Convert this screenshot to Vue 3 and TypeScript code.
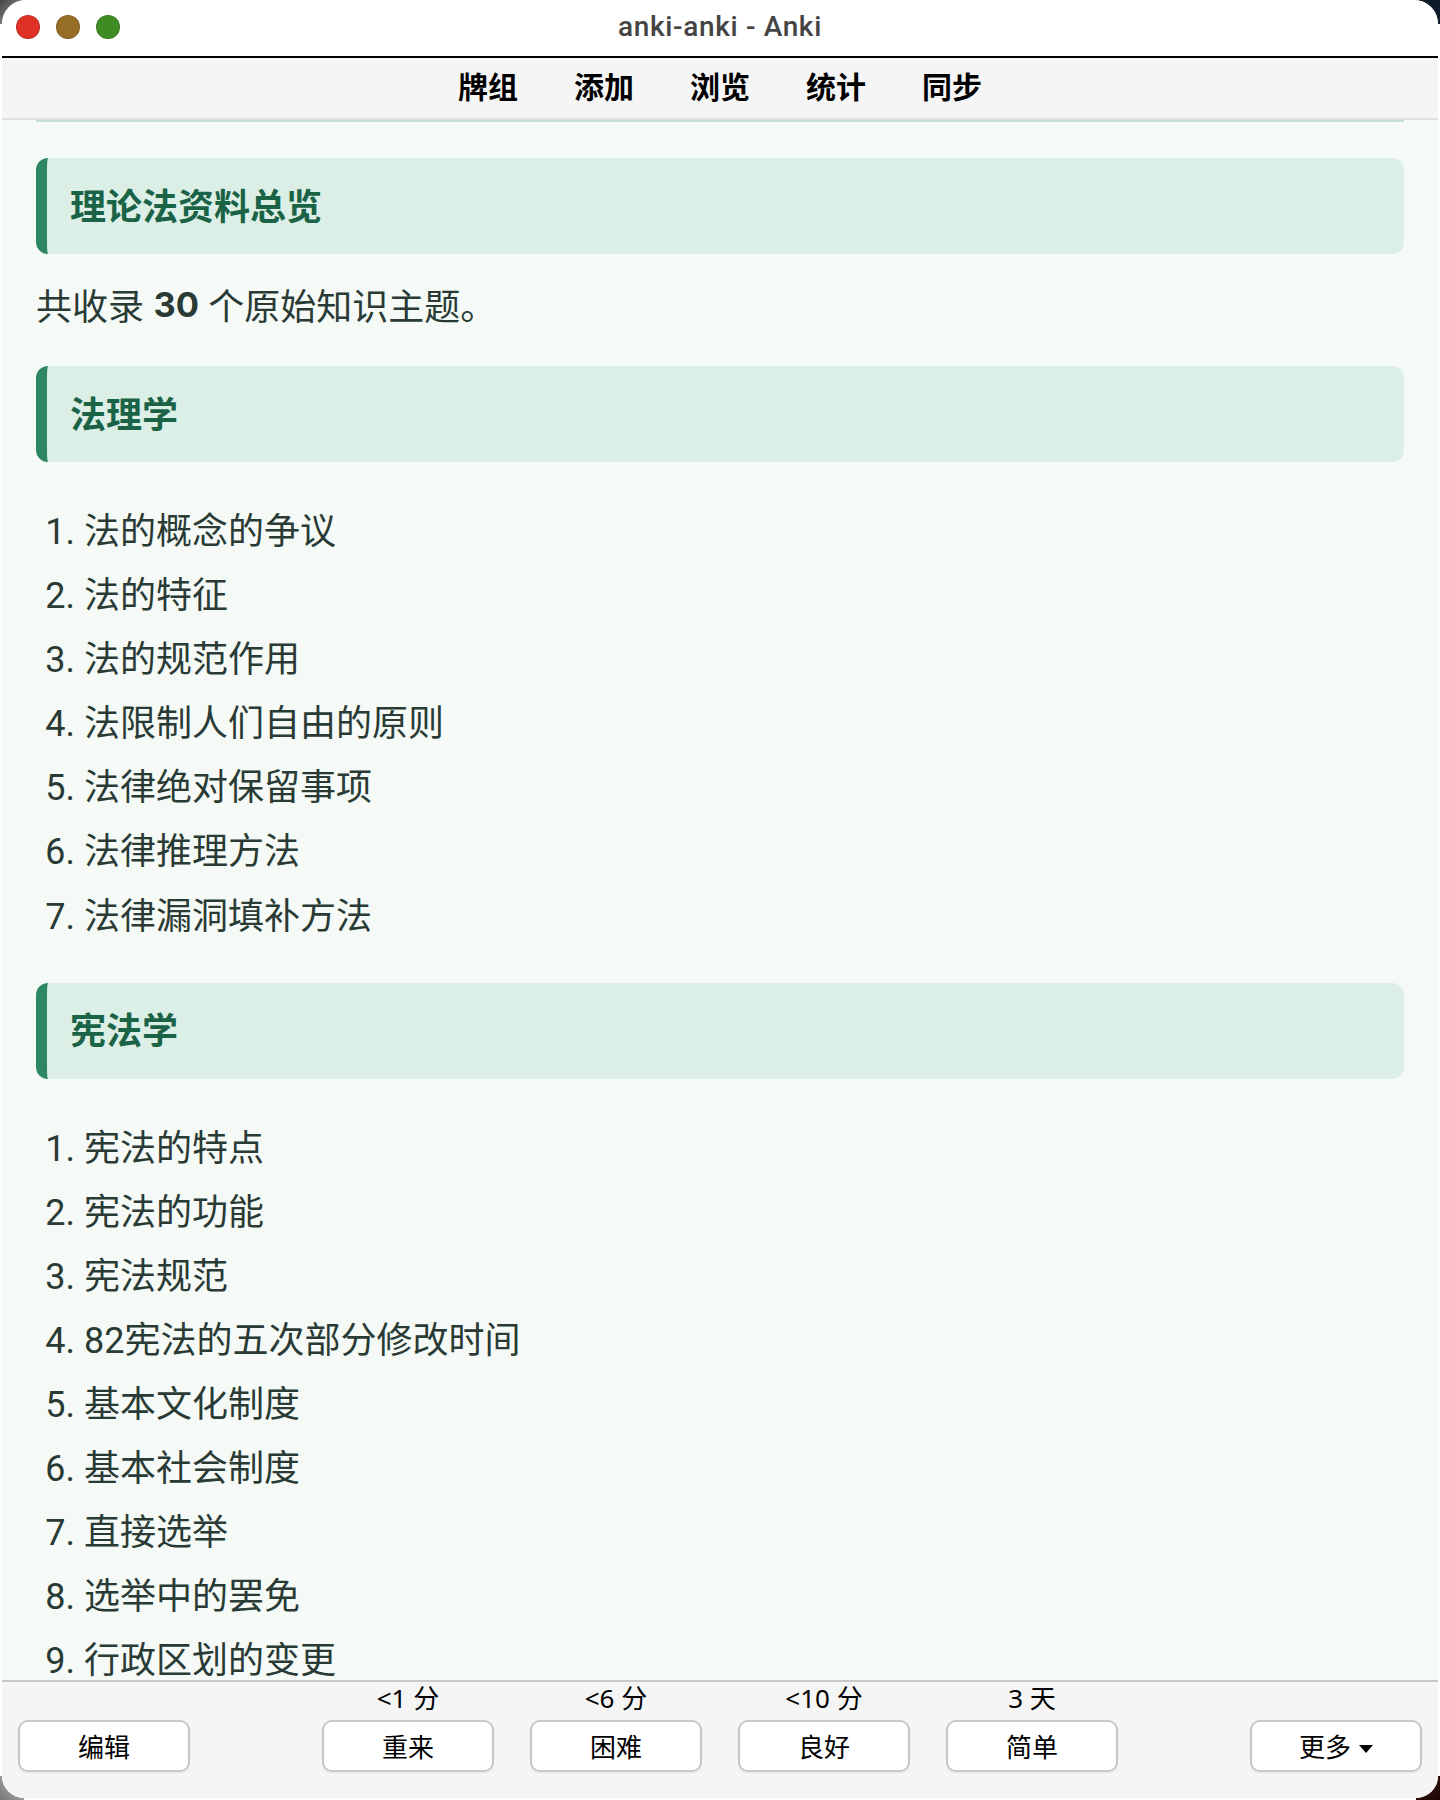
<script setup lang="ts">
const nav: string[] = ['牌组', '添加', '浏览', '统计', '同步']
const jurisprudence: string[] = ['法的概念的争议', '法的特征', '法的规范作用', '法限制人们自由的原则', '法律绝对保留事项', '法律推理方法', '法律漏洞填补方法']
const constitution: string[] = ['宪法的特点', '宪法的功能', '宪法规范', '82宪法的五次部分修改时间', '基本文化制度', '基本社会制度', '直接选举', '选举中的罢免', '行政区划的变更']
const answers: { time: string; label: string }[] = [
  { time: '<1 分', label: '重来' },
  { time: '<6 分', label: '困难' },
  { time: '<10 分', label: '良好' },
  { time: '3 天', label: '简单' },
]
</script>

<template>
  <div class="desk">
    <div class="window">
      <header class="titlebar">
        <div class="lights">
          <span class="light red"></span>
          <span class="light amber"></span>
          <span class="light green"></span>
        </div>
        <div class="title">anki-anki - Anki</div>
      </header>
      <nav class="toolbar">
        <span v-for="n in nav" :key="n" class="nav-item">{{ n }}</span>
      </nav>
      <main class="content">
        <div class="rule"></div>
        <h2 class="heading first">理论法资料总览</h2>
        <p class="intro">共收录 <strong>30</strong> 个原始知识主题。</p>
        <h2 class="heading">法理学</h2>
        <ol class="list">
          <li v-for="t in jurisprudence" :key="t">{{ t }}</li>
        </ol>
        <h2 class="heading">宪法学</h2>
        <ol class="list">
          <li v-for="t in constitution" :key="t">{{ t }}</li>
        </ol>
      </main>
      <footer class="bottom">
        <div class="col side">
          <span class="time"></span>
          <button class="btn">编辑</button>
        </div>
        <div class="answers">
          <div v-for="a in answers" :key="a.label" class="col">
            <span class="time">{{ a.time }}</span>
            <button class="btn">{{ a.label }}</button>
          </div>
        </div>
        <div class="col side">
          <span class="time"></span>
          <button class="btn">更多<span class="caret"></span></button>
        </div>
      </footer>
    </div>
  </div>
</template>

<style>
html, body { margin: 0; background: #fff; }
</style>

<style scoped>
.desk {
  width: 1440px;
  height: 1800px;
  box-sizing: border-box;
  padding: 0 2px 2px;
  background-color: #fff;
  background-image:
    linear-gradient(135deg, #444, #aaa),
    linear-gradient(225deg, #0b1626, #1a2636),
    linear-gradient(315deg, #1a0705, #3a1410),
    linear-gradient(45deg, #777, #bbb);
  background-size: 24px 24px;
  background-repeat: no-repeat;
  background-position: left top, right top, right bottom, left bottom;
}
.window {
  height: 1798px;
  display: flex;
  flex-direction: column;
  overflow: hidden;
  border-radius: 24px 24px 22px 22px;
  background: #f5f5f5;
  font-family: "Noto Sans", "Noto Sans CJK SC", sans-serif;
}
.titlebar {
  height: 56px;
  flex: none;
  position: relative;
  display: flex;
  align-items: center;
  justify-content: center;
  background: #fff;
  border-bottom: 2px solid #000;
}
.lights {
  position: absolute;
  left: 14px;
  top: 15px;
  display: flex;
  gap: 16px;
}
.light { width: 24px; height: 24px; border-radius: 50%; box-sizing: border-box; border: 1px solid rgba(0,0,0,.15); }
.red { background: #e03126; }
.amber { background: #976e27; }
.green { background: #3f8c24; }
.title { font-family: Roboto, sans-serif; font-weight: 500; font-size: 28px; line-height: 52px; padding-bottom: 2px; color: #444; letter-spacing: .65px; }
.toolbar {
  height: 60px;
  flex: none;
  box-sizing: border-box;
  padding-bottom: 2px;
  display: flex;
  align-items: center;
  justify-content: center;
  gap: 56px;
  background: #f5f5f5;
}
.nav-item { font-size: 30px; line-height: 40px; font-weight: 700; color: #000; }
.content {
  flex: 1;
  min-height: 0;
  overflow: hidden;
  border-top: 2px solid #e0e0e0;
  background: #f5faf7;
  color: #2a3a35;
  padding: 0 34px;
}
.rule { height: 2px; background: #c4e0d4; margin-bottom: 36px; }
.heading {
  margin: 0;
  height: 96px;
  box-sizing: border-box;
  padding: 0 0 4px 23px;
  display: flex;
  align-items: center;
  background: #dcefe6;
  border-left: 11px solid #2e8763;
  border-radius: 12px;
  font-size: 36px;
  font-weight: 700;
  color: #1a6347;
}
.intro { margin: 0; height: 112px; padding-bottom: 12px; box-sizing: border-box; display: flex; align-items: center; font-size: 36px; white-space: pre-wrap; }
.intro strong { font-family: Inter, "Noto Sans", sans-serif; font-size: 34.5px; font-weight: 700; }
.list { margin: 38px 0 34px; padding: 0 0 0 48px; font-family: Roboto, "Noto Sans CJK SC", sans-serif; font-size: 36px; line-height: 64.1px; }
.bottom {
  height: 118px;
  flex: none;
  box-sizing: border-box;
  border-top: 2px solid #c8c8c8;
  display: flex;
  justify-content: space-between;
  padding: 0 16px;
  background: #f5f5f5;
}
.answers { display: flex; gap: 36px; }
.col { display: flex; flex-direction: column; align-items: center; }
.time { height: 38px; line-height: 32px; font-size: 26px; color: #000; }
.btn {
  width: 172px;
  height: 52px;
  padding: 0;
  background: #fff;
  border: 2px solid #c8c8c8;
  border-radius: 10px;
  box-shadow: 0 1px 2px rgba(0,0,0,.08);
  font: inherit;
  font-size: 26px;
  color: #000;
  display: flex;
  align-items: center;
  justify-content: center;
}
.caret {
  width: 0;
  height: 0;
  margin-left: 8px;
  margin-top: 6px;
  border-left: 7px solid transparent;
  border-right: 7px solid transparent;
  border-top: 8px solid #000;
}
</style>
